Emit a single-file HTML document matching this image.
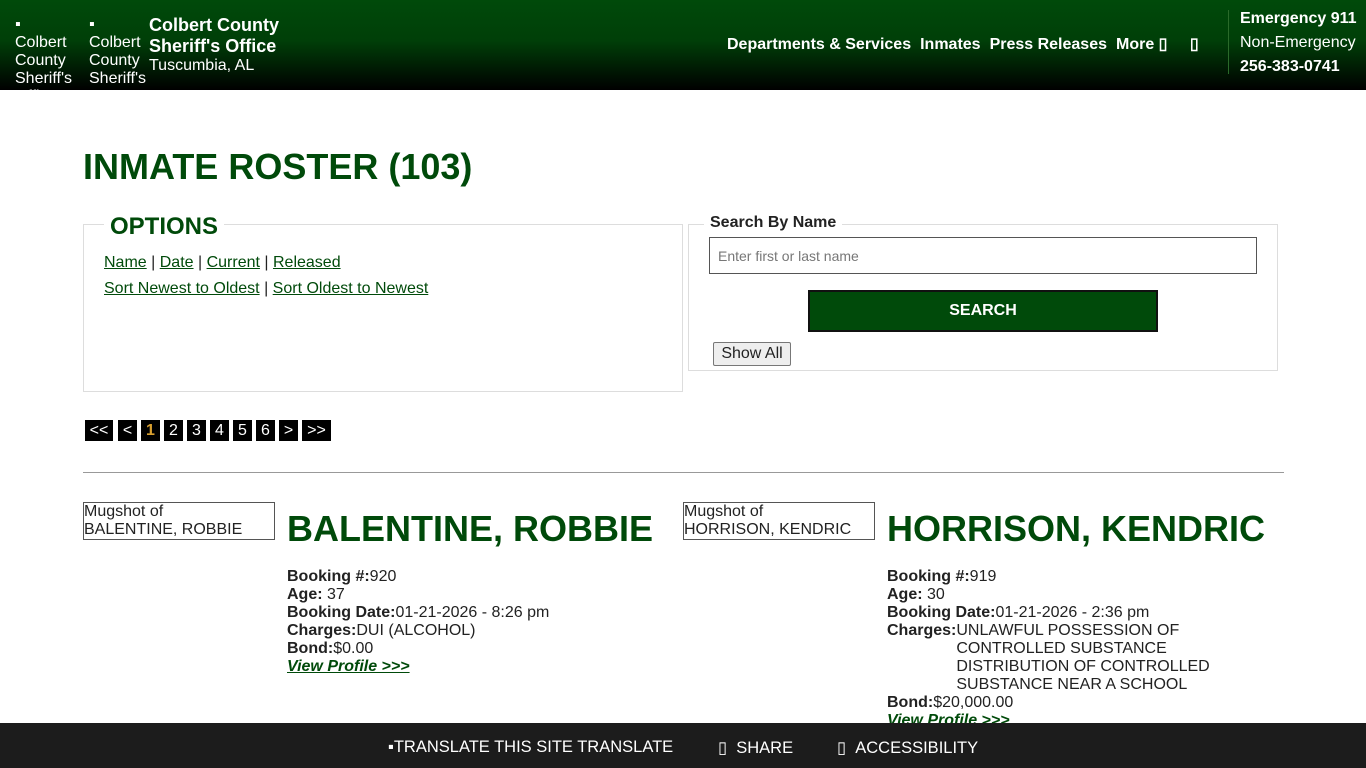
<!DOCTYPE html>
<html><head><meta charset="utf-8"><style>
*{box-sizing:border-box}
body{margin:0;width:1366px;height:768px;overflow:hidden;font-family:"Liberation Sans",Arial,sans-serif;background:#fff;color:#222;position:relative}
.hdr{position:absolute;left:0;top:0;width:1366px;height:90px;background:linear-gradient(#004a0a 0%,#003f08 45%,#000 100%);color:#fff}
.a{position:absolute}
.imgalt{font-size:16px;line-height:18px;color:#fff}
.nav{position:absolute;top:34px;left:727px;font-size:16px;font-weight:bold;white-space:nowrap}
.nav span{margin-right:9px}
h1{position:absolute;left:83px;top:146px;margin:0;font-size:36px;color:#004a0a;font-weight:bold}
.box{position:absolute;border:1px solid #ddd}
a{color:#004a0a}
.pg{position:absolute;top:420px;height:21px;background:#000;color:#fff;font-size:16px;line-height:21px;text-align:center}
.nm{position:absolute;font-size:36px;font-weight:bold;color:#004a0a;white-space:nowrap}
.det{position:absolute;font-size:16px;line-height:18px}
.det b{font-weight:bold}
.foot{position:absolute;left:0;top:723px;width:1366px;height:45px;background:#1c1c1c;color:#fff;font-size:16.5px}
</style></head><body>
<div class="hdr">
 <div class="a imgalt" style="left:15px;top:16px;width:60px;height:74px;overflow:hidden">▪<br>Colbert County Sheriff's Office</div>
 <div class="a imgalt" style="left:89px;top:16px;width:60px;height:74px;overflow:hidden">▪<br>Colbert County Sheriff's</div>
 <div class="a" style="left:149px;top:15px;font-size:18px;line-height:21px;font-weight:bold">Colbert County<br>Sheriff's Office</div>
 <div class="a" style="left:149px;top:57px;font-size:16px">Tuscumbia, AL</div>
 <div class="nav"><span>Departments &amp; Services</span><span>Inmates</span><span>Press Releases</span><span>More ▯</span> &nbsp; ▯</div>
 <div class="a" style="left:1228px;top:10px;width:1px;height:64px;background:#2a6a2a"></div>
 <div class="a" style="left:1240px;top:7px;font-size:16px;line-height:24px"><b>Emergency 911</b><br>Non-Emergency<br><b>256-383-0741</b></div>
</div>
<h1>INMATE ROSTER (103)</h1>
<div class="box" style="left:83px;top:224px;width:600px;height:168px"></div>
<div class="a" style="left:104px;top:213px;background:#fff;padding:0 6px;font-size:24px;font-weight:bold;color:#004a0a">OPTIONS</div>
<div class="a" style="left:104px;top:250px;font-size:16px;line-height:26px"><a href="#">Name</a> | <a href="#">Date</a> | <a href="#">Current</a> | <a href="#">Released</a><br><a href="#">Sort Newest to Oldest</a> | <a href="#">Sort Oldest to Newest</a></div>
<div class="box" style="left:688px;top:224px;width:590px;height:147px"></div>
<div class="a" style="left:704px;top:214px;background:#fff;padding:0 6px;font-size:16px;font-weight:bold">Search By Name</div>
<div class="a" style="left:709px;top:237px;width:548px;height:37px;border:1px solid #555;font-size:14px;color:#777;padding:10px 8px">Enter first or last name</div>
<div class="a" style="left:808px;top:290px;width:350px;height:42px;background:#004a0a;border:2px solid #111;color:#fff;font-weight:bold;font-size:16px;text-align:center;line-height:38px">SEARCH</div>
<div class="a" style="left:713px;top:342px;width:78px;height:24px;border:1px solid #777;background:#eee;border-radius:2px;font-size:16px;text-align:center;line-height:22px">Show All</div>
<div class="pg" style="left:85px;width:28px">&lt;&lt;</div>
<div class="pg" style="left:118px;width:19px">&lt;</div>
<div class="pg" style="left:141px;width:19px;color:#d9a030;font-weight:bold">1</div>
<div class="pg" style="left:164px;width:19px">2</div>
<div class="pg" style="left:187px;width:19px">3</div>
<div class="pg" style="left:210px;width:19px">4</div>
<div class="pg" style="left:233px;width:19px">5</div>
<div class="pg" style="left:256px;width:19px">6</div>
<div class="pg" style="left:279px;width:19px">&gt;</div>
<div class="pg" style="left:302px;width:29px">&gt;&gt;</div>
<div class="a" style="left:83px;top:472px;width:1201px;height:1px;background:#999"></div>
<div class="a" style="left:83px;top:502px;width:192px;height:38px;border:1px solid #555;font-size:16px;line-height:18px;overflow:hidden">Mugshot of<br>BALENTINE, ROBBIE</div>
<div class="nm" style="left:287px;top:508px">BALENTINE, ROBBIE</div>
<div class="det" style="left:287px;top:568px"><b>Booking #:</b>920<br><b>Age:</b> 37<br><b>Booking Date:</b>01-21-2026 - 8:26 pm<br><b>Charges:</b>DUI (ALCOHOL)<br><b>Bond:</b>$0.00<br><a href="#" style="font-weight:bold;font-style:italic">View Profile &gt;&gt;&gt;</a></div>
<div class="a" style="left:683px;top:502px;width:192px;height:38px;border:1px solid #555;font-size:16px;line-height:18px;overflow:hidden">Mugshot of<br>HORRISON, KENDRIC</div>
<div class="nm" style="left:887px;top:508px">HORRISON, KENDRIC</div>
<div class="det" style="left:887px;top:568px"><b>Booking #:</b>919<br><b>Age:</b> 30<br><b>Booking Date:</b>01-21-2026 - 2:36 pm<br><div style="display:flex"><b>Charges:</b><div>UNLAWFUL POSSESSION OF<br>CONTROLLED SUBSTANCE<br>DISTRIBUTION OF CONTROLLED<br>SUBSTANCE NEAR A SCHOOL</div></div><b>Bond:</b>$20,000.00<br><a href="#" style="font-weight:bold;font-style:italic">View Profile &gt;&gt;&gt;</a></div>
<div class="foot">
 <div class="a" style="left:388px;top:15px">▪TRANSLATE THIS SITE TRANSLATE</div>
 <div class="a" style="left:718px;top:15px">▯ &nbsp;SHARE</div>
 <div class="a" style="left:837px;top:15px">▯ &nbsp;ACCESSIBILITY</div>
</div>
</body></html>
